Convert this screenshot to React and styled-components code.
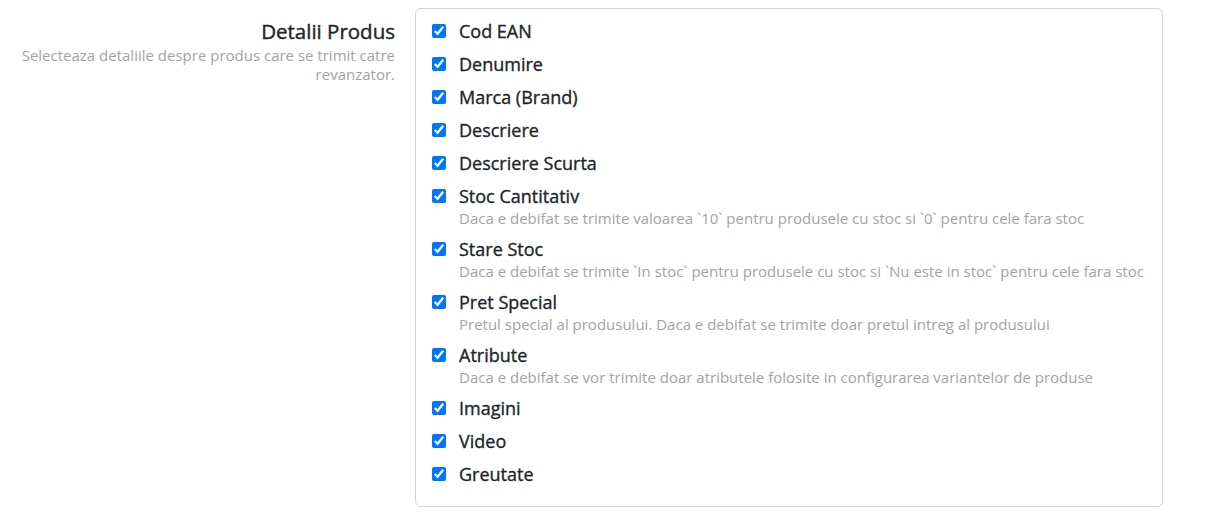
import styled, { createGlobalStyle } from 'styled-components'

const GlobalStyle = createGlobalStyle`
  body {
    margin: 0;
    background: #fff;
    font-family: 'Open Sans', 'Noto Sans', sans-serif;
    color: #212529;
  }
`

const fields = [
  { label: 'Cod EAN' },
  { label: 'Denumire' },
  { label: 'Marca (Brand)' },
  { label: 'Descriere' },
  { label: 'Descriere Scurta' },
  {
    label: 'Stoc Cantitativ',
    hint: 'Daca e debifat se trimite valoarea `10` pentru produsele cu stoc si `0` pentru cele fara stoc',
  },
  {
    label: 'Stare Stoc',
    hint: 'Daca e debifat se trimite `In stoc` pentru produsele cu stoc si `Nu este in stoc` pentru cele fara stoc',
  },
  {
    label: 'Pret Special',
    hint: 'Pretul special al produsului. Daca e debifat se trimite doar pretul intreg al produsului',
  },
  {
    label: 'Atribute',
    hint: 'Daca e debifat se vor trimite doar atributele folosite in configurarea variantelor de produse',
  },
  { label: 'Imagini' },
  { label: 'Video' },
  { label: 'Greutate' },
]

const App = () => {
  return (
    <>
      <GlobalStyle />
      <Section>
        <Intro>
          <Title>Detalii Produs</Title>
          <Description>
            Selecteaza detaliile despre produs care se trimit catre revanzator.
          </Description>
        </Intro>
        <Panel>
          {fields.map((f) => (
            <Option key={f.label}>
              <Check type='checkbox' defaultChecked />
              <OptionText>
                <OptionLabel>{f.label}</OptionLabel>
                {f.hint && <OptionHint>{f.hint}</OptionHint>}
              </OptionText>
            </Option>
          ))}
        </Panel>
      </Section>
    </>
  )
}

const Section = styled.div`
  display: grid;
  grid-template-columns: 387px 748px;
  column-gap: 20px;
  padding: 8px 0 0 8px;
`

const Intro = styled.div`
  text-align: right;
  padding-top: 10px;
`

const Title = styled.h3`
  margin: 0;
  font-size: 20.5px;
  font-weight: 400;
  -webkit-text-stroke: 0.4px #212529;
  line-height: 26px;
  color: #212529;
`

const Description = styled.p`
  margin: 2px 0 0 12px;
  font-size: 15px;
  line-height: 19px;
  color: #a3a3a3;
`

const Panel = styled.div`
  border: 1px solid #d3d3d3;
  border-radius: 6px;
  padding: 10px 16px 11px;
`

const Option = styled.label`
  display: flex;
  align-items: flex-start;
  gap: 13px;
  margin-bottom: 9px;
  cursor: pointer;
`

const Check = styled.input`
  width: 14px;
  height: 14px;
  margin: 5px 0 0 0;
  flex-shrink: 0;
`

const OptionText = styled.div`
  display: flex;
  flex-direction: column;
`

const OptionLabel = styled.span`
  font-size: 18px;
  font-weight: 400;
  -webkit-text-stroke: 0.35px #212529;
  line-height: 24px;
  color: #212529;
`

const OptionHint = styled.span`
  font-size: 15px;
  line-height: 20px;
  color: #a3a3a3;
`

export default App
